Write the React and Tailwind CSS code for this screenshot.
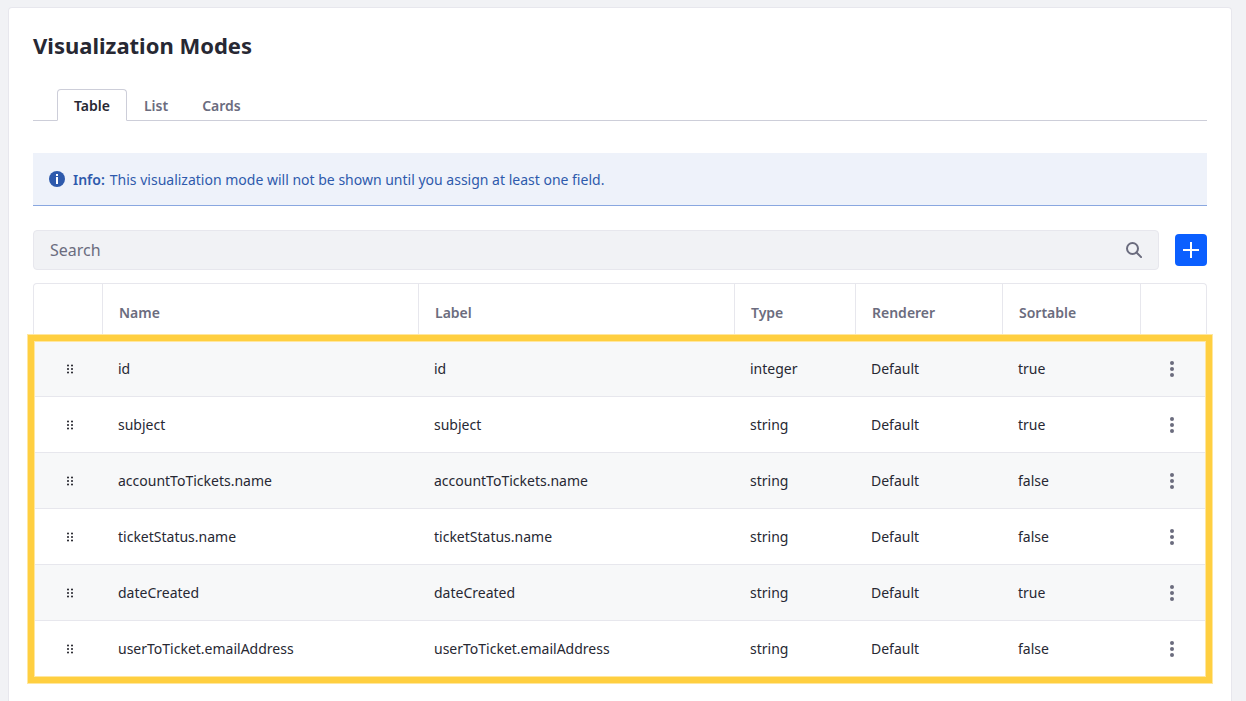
import React from "react";

const tabs = ["Table", "List", "Cards"];

const fields = [
  { name: "id", label: "id", type: "integer", renderer: "Default", sortable: "true" },
  { name: "subject", label: "subject", type: "string", renderer: "Default", sortable: "true" },
  { name: "accountToTickets.name", label: "accountToTickets.name", type: "string", renderer: "Default", sortable: "false" },
  { name: "ticketStatus.name", label: "ticketStatus.name", type: "string", renderer: "Default", sortable: "false" },
  { name: "dateCreated", label: "dateCreated", type: "string", renderer: "Default", sortable: "true" },
  { name: "userToTicket.emailAddress", label: "userToTicket.emailAddress", type: "string", renderer: "Default", sortable: "false" },
];

function InfoIcon() {
  return (
    <svg className="w-4 h-4 shrink-0" viewBox="0 0 16 16" aria-hidden="true">
      <circle cx="8" cy="8" r="8" fill="#2e5aac" />
      <rect x="7" y="3" width="2" height="2" fill="#fff" />
      <path d="M7 6h2v7H7z" fill="#fff" />
    </svg>
  );
}

function SearchIcon() {
  return (
    <svg className="w-4 h-4" viewBox="0 0 16 16" fill="none" stroke="#6b6c7e" strokeWidth="2" aria-hidden="true">
      <circle cx="6.5" cy="6.5" r="5.5" />
      <path d="M10.5 10.5l4.6 4.6" strokeLinecap="round" />
    </svg>
  );
}

function PlusIcon() {
  return (
    <svg className="w-4 h-4" viewBox="0 0 16 16" aria-hidden="true">
      <path d="M7 0h2v7h7v2H9v7H7V9H0V7h7z" fill="#fff" />
    </svg>
  );
}

function DragIcon() {
  return (
    <svg className="w-4 h-4" viewBox="0 0 16 16" fill="#1c1c24" aria-hidden="true">
      {[4.4, 8, 11.6].map((y) => (
        <g key={y}>
          <circle cx="6" cy={y} r="1" />
          <circle cx="10" cy={y} r="1" />
        </g>
      ))}
    </svg>
  );
}

function MoreIcon() {
  return (
    <svg className="w-4 h-4" viewBox="0 0 16 16" fill="#6b6c7e" aria-hidden="true">
      <circle cx="8" cy="2" r="2" />
      <circle cx="8" cy="8" r="2" />
      <circle cx="8" cy="14" r="2" />
    </svg>
  );
}

function FieldsTable() {
  const th = "border-l border-[#e7e7ed] pl-4 text-left font-semibold";
  return (
    <div className="relative mt-[13px]">
      <div className="border border-b-0 border-[#e7e7ed] rounded-t">
        <table className="w-full table-fixed border-separate border-spacing-0 text-sm">
          <colgroup>
            <col className="w-[68px]" />
            <col />
            <col />
            <col className="w-[121px]" />
            <col className="w-[147px]" />
            <col className="w-[138px]" />
            <col className="w-[66px]" />
          </colgroup>
          <thead className="text-[#6b6c7e]">
            <tr className="h-[57px]">
              <td></td>
              <th className={th}>Name</th>
              <th className={th}>Label</th>
              <th className={th}>Type</th>
              <th className={th}>Renderer</th>
              <th className={th}>Sortable</th>
              <td className="border-l border-[#e7e7ed]"></td>
            </tr>
          </thead>
          <tbody className="text-[#272833] [&_td]:border-b [&_td]:border-[#e7e7ed]">
            {fields.map((field) => (
              <tr key={field.name} className="h-14 odd:bg-[#f7f8f9]">
                <td>
                  <button aria-label="Drag" className="flex items-center justify-center w-4 ml-7">
                    <DragIcon />
                  </button>
                </td>
                <td className="pl-4">{field.name}</td>
                <td className="pl-4">{field.label}</td>
                <td className="pl-4">{field.type}</td>
                <td className="pl-4">{field.renderer}</td>
                <td className="pl-4">{field.sortable}</td>
                <td>
                  <button aria-label="Actions" className="flex items-center justify-center w-4 ml-6">
                    <MoreIcon />
                  </button>
                </td>
              </tr>
            ))}
          </tbody>
        </table>
      </div>

      {/* Highlight around the rows */}
      <div className="absolute top-[52px] -bottom-[6px] -left-[5px] -right-[5px] border-6 border-[#ffcf40] shadow-[0_0_0_1px_#ffe7a0,inset_0_0_0_1px_#ffe7a0] pointer-events-none"></div>
    </div>
  );
}

function App() {
  return (
    <div className="min-h-screen bg-[#f1f2f5] pt-[7px] pl-2 pr-[14px] flex font-['Noto_Sans',sans-serif]">
      <main className="grow min-w-0 bg-white border border-b-0 border-[#e7e7ed] rounded-t px-6 pt-6 pb-4">
        <h1 className="text-[22px] leading-[26px] font-bold text-[#272833]">Visualization Modes</h1>

        <div role="tablist" className="mt-[31px] flex pl-6 border-b border-[#cdced9] text-sm font-semibold">
          {tabs.map((tab, i) => (
            <button
              key={tab}
              role="tab"
              aria-selected={i === 0}
              className={`h-8 px-4 pt-0.5 -mb-px border rounded-t ${
                i === 0
                  ? "border-[#cdced9] border-b-white bg-white text-[#272833]"
                  : "border-transparent text-[#6b6c7e]"
              }`}
            >
              {tab}
            </button>
          ))}
        </div>

        <div className="mt-8 h-[53px] px-4 flex items-center gap-2 bg-[#eef2fa] border-b border-[#89a7e0] text-sm text-[#2e5aac]">
          <InfoIcon />
          <p className="pt-0.5">
            <strong className="mr-[5px] font-semibold">Info:</strong>
            This visualization mode will not be shown until you assign at least one field.
          </p>
        </div>

        <div className="mt-6 flex items-center gap-4">
          <div className="grow h-10 flex items-center bg-[#f1f2f5] border border-[#e7e7ed] rounded">
            <input
              type="text"
              aria-label="Search"
              placeholder="Search"
              className="grow h-full pl-4 text-base bg-transparent outline-none text-[#272833] placeholder:text-[#6b6c7e]"
            />
            <button aria-label="Submit search" className="px-4">
              <SearchIcon />
            </button>
          </div>
          <button aria-label="Add field" className="w-8 h-8 shrink-0 flex items-center justify-center bg-[#0b5fff] rounded">
            <PlusIcon />
          </button>
        </div>

        <FieldsTable />
      </main>
    </div>
  );
}

export default App;
